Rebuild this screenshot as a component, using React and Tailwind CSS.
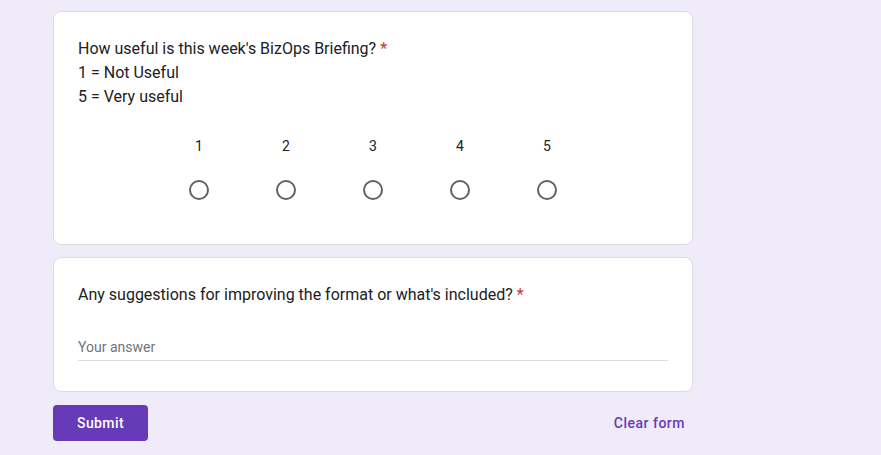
export default function App() {
  const scale = [1, 2, 3, 4, 5]
  return (
    <div
      className="min-h-[455px] bg-[#f0ebf8] pt-[11px] pl-[53px] text-[#202124]"
      style={{ fontFamily: 'Roboto, "Liberation Sans", sans-serif' }}
    >
      <div className="w-[640px]">
        {/* Question 1 */}
        <div className="rounded-lg border border-[#dadce0] bg-white px-6 pt-[25px] pb-[44px]">
          <div className="text-base leading-6">
            <div>
              How useful is this week's BizOps Briefing?
              <span className="ml-1 text-[#d93025]">*</span>
            </div>
            <div>1 = Not Useful</div>
            <div>5 = Very useful</div>
          </div>
          <div className="mt-[27px] flex justify-center">
            {scale.map((n) => (
              <div key={n} className="flex w-[87px] flex-col items-center">
                <span className="text-sm leading-5">{n}</span>
                <span className="mt-6 block h-5 w-5 rounded-full border-2 border-[#5f6368]" />
              </div>
            ))}
          </div>
        </div>

        {/* Question 2 */}
        <div className="mt-3 rounded-lg border border-[#dadce0] bg-white px-6 pt-[25px] pb-[30px]">
          <div className="text-base leading-6">
            Any suggestions for improving the format or what's included?
            <span className="ml-1 text-[#d93025]">*</span>
          </div>
          <div className="mt-[30px] w-[590px] border-b border-[#dadce0] pb-[3px] text-sm leading-5 text-[#70757a]">
            Your answer
          </div>
        </div>

        {/* Actions */}
        <div className="mt-[13px] flex items-center justify-between">
          <button className="h-9 w-[95px] rounded bg-[#673ab7] text-sm font-medium tracking-[0.4px] text-white">
            Submit
          </button>
          <button className="mr-[8px] text-sm font-medium tracking-[0.5px] text-[#673ab7]">
            Clear form
          </button>
        </div>
      </div>
    </div>
  )
}
